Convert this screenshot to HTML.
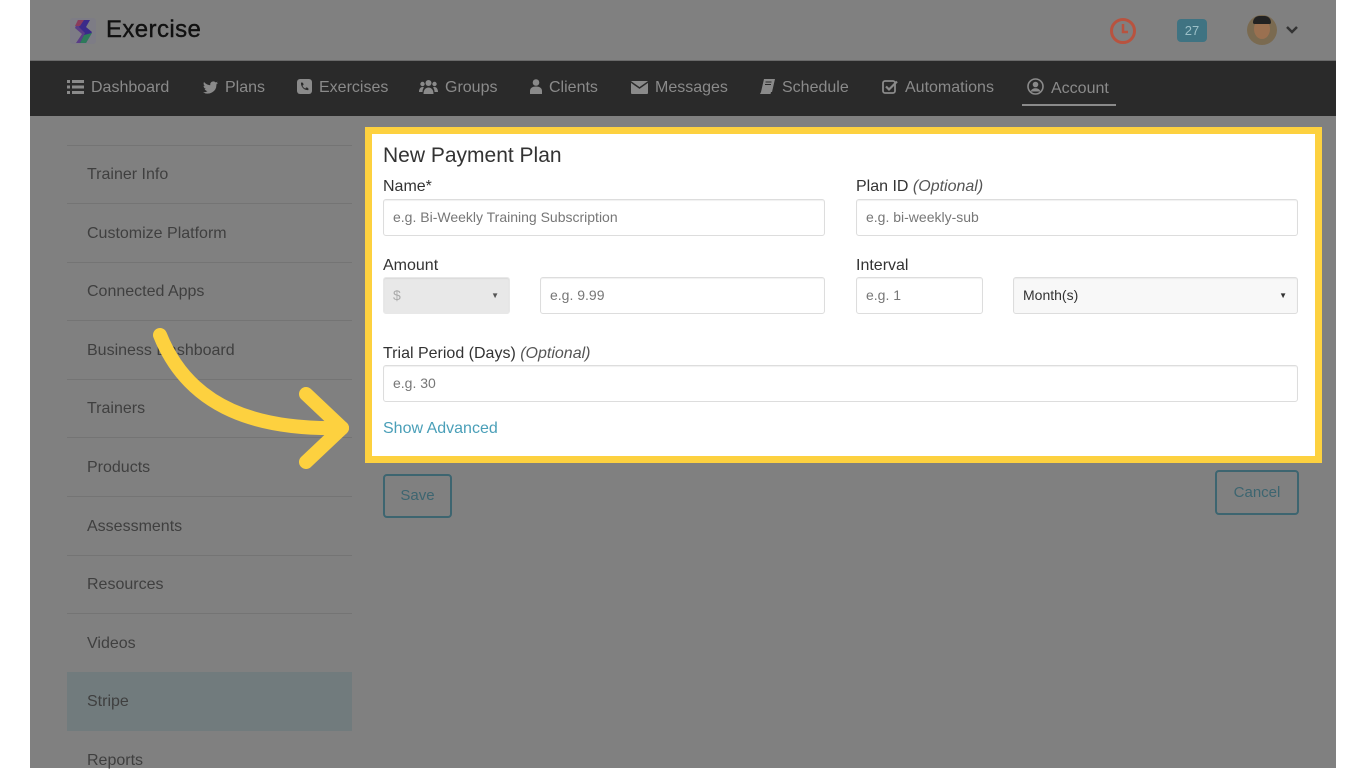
<!DOCTYPE html>
<html><head><meta charset="utf-8"><style>
*{box-sizing:border-box;margin:0;padding:0}
body{width:1366px;height:768px;background:#fff;font-family:"Liberation Sans",sans-serif;position:relative;overflow:hidden}
.pg{position:absolute;left:30px;top:0;width:1306px;height:768px;background:#808080}
.a{position:absolute}
.nav{left:30px;top:60px;width:1306px;height:56px;background:#2a2a2a;border-top:1px solid #6a6a6a}
.ni{position:absolute;top:78px;color:#8a8a8a;font-size:16px;height:20px;line-height:20px;white-space:nowrap}
.ni svg{vertical-align:-2px;margin-right:7px}
.sl{position:absolute;left:67px;width:285px;height:1px;background:#747474}
.st{position:absolute;left:87px;font-size:16px;color:#3f3f3f}
.box{left:365px;top:127px;width:957px;height:336px;border:7px solid #fdd13f;background:#fff}
.lbl{position:absolute;font-size:16px;color:#333}
.in{position:absolute;height:37px;border:1px solid #ddd;border-radius:3px;background:#fff;font-size:14px;color:#777;padding-left:9px;line-height:35px;box-shadow:inset 0 1px 1px rgba(0,0,0,.06)}
.btn{position:absolute;border:2px solid #3d6570;border-radius:4px;color:#3d6570;font-size:15px;text-align:center}
</style></head><body>
<div class="pg"></div>
<svg class="a" style="left:70px;top:17px" width="28" height="28" viewBox="0 0 28 28">
<rect x="0" y="1" width="26" height="26" rx="3" fill="#7d7c85"/>
<path d="M8 3 L18 3 L13 10 L20 16 L14 26 L6 26 L12 17 L5 11 Z" fill="#5a3d86"/>
<path d="M12 3 L20 3 L16 10 L22 15 L16 26 L10 26 L15 16 L9 10 Z" fill="#3a2a8a"/>
<path d="M14 18 L22 16 L16 26 L10 26 Z" fill="#2e7a5a"/>
<path d="M8 3 L14 3 L10 9 L5 9 Z" fill="#8a3b5c"/>
</svg>
<div class="a" style="left:106px;top:16px;font-size:24px;color:#111;letter-spacing:0.4px;-webkit-text-stroke:0.4px #111">Exercise</div>
<svg class="a" style="left:1109px;top:17px" width="28" height="28" viewBox="0 0 28 28"><circle cx="14" cy="14" r="11.5" fill="none" stroke="#b8533f" stroke-width="3"/><path d="M14 7 V15 H19" fill="none" stroke="#b8533f" stroke-width="2.5"/></svg>
<div class="a" style="left:1177px;top:19px;width:30px;height:23px;background:#3f7382;border-radius:4px;color:#9cc0c8;font-size:13px;text-align:center;line-height:23px">27</div>
<div class="a" style="left:1247px;top:15px;width:30px;height:30px;border-radius:50%;background:#7a6a50;overflow:hidden"><div style="position:absolute;left:7px;top:4px;width:16px;height:20px;border-radius:50%;background:#9a7050"></div><div style="position:absolute;left:6px;top:1px;width:18px;height:8px;border-radius:8px 8px 2px 2px;background:#222"></div></div>
<svg class="a" style="left:1285px;top:25px" width="14" height="10" viewBox="0 0 14 10"><path d="M2 2 L7 7 L12 2" fill="none" stroke="#333" stroke-width="2.5"/></svg>
<div class="a nav"></div>
<div class="ni" style="left:67px"><svg width="17" height="14" viewBox="0 0 17 14" fill="#8a8a8a"><rect x="0" y="0" width="3" height="3"/><rect x="5" y="0" width="12" height="3"/><rect x="0" y="5.5" width="3" height="3"/><rect x="5" y="5.5" width="12" height="3"/><rect x="0" y="11" width="3" height="3"/><rect x="5" y="11" width="12" height="3"/></svg>Dashboard</div>
<div class="ni" style="left:203px"><svg width="15" height="13" viewBox="0 0 16 13" fill="#8a8a8a"><path d="M16 1.5c-.6.3-1.2.4-1.9.5.7-.4 1.2-1 1.4-1.8-.6.4-1.3.6-2.1.8A3.3 3.3 0 0 0 7.8 4C5.1 3.9 2.7 2.6 1.1.6c-.9 1.5-.4 3.4 1 4.4-.5 0-1-.2-1.5-.4 0 1.6 1.1 3 2.6 3.3-.5.1-1 .2-1.5.1.4 1.3 1.7 2.3 3.1 2.3A6.6 6.6 0 0 1 0 11.5 9.3 9.3 0 0 0 14.3 3.2c.7-.4 1.2-1 1.7-1.7z"/></svg>Plans</div>
<div class="ni" style="left:297px"><svg width="15" height="15" viewBox="0 0 15 15"><rect width="15" height="15" rx="3" fill="#8a8a8a"/><path d="M4 3.5l2 .3.6 2-1.2 1c.6 1.3 1.5 2.2 2.8 2.8l1-1.2 2 .6.3 2c-4 .8-8-3.2-7.5-7.5z" fill="#2a2a2a"/></svg>Exercises</div>
<div class="ni" style="left:419px"><svg width="19" height="15" viewBox="0 0 19 15" fill="#8a8a8a"><circle cx="9.5" cy="4" r="3"/><circle cx="3.5" cy="5" r="2.2"/><circle cx="15.5" cy="5" r="2.2"/><path d="M4.5 15c0-4 2-6.5 5-6.5s5 2.5 5 6.5z"/><path d="M0 13c0-3 1.5-5 3.5-5 1 0 1.5.5 1.5.5-1 1-1.5 2.5-1.5 4.5z"/><path d="M19 13c0-3-1.5-5-3.5-5-1 0-1.5.5-1.5.5 1 1 1.5 2.5 1.5 4.5z"/></svg>Groups</div>
<div class="ni" style="left:530px"><svg width="12" height="15" viewBox="0 0 12 15" fill="#8a8a8a"><circle cx="6" cy="3.5" r="3.3"/><path d="M0 15v-3c0-3 2.5-4.5 6-4.5s6 1.5 6 4.5v3z"/></svg>Clients</div>
<div class="ni" style="left:631px"><svg width="17" height="13" viewBox="0 0 17 13" fill="#8a8a8a"><rect width="17" height="13" rx="1"/><path d="M0 1l8.5 6 8.5-6" stroke="#2a2a2a" stroke-width="1.5" fill="none"/></svg>Messages</div>
<div class="ni" style="left:760px"><svg width="15" height="15" viewBox="0 0 15 15" fill="#8a8a8a"><path d="M4 0h11l-3 13H1z"/><path d="M1 13h10l-.5 2H0z"/><path d="M5.5 3h6M5 5.5h6" stroke="#2a2a2a" stroke-width="1"/></svg>Schedule</div>
<div class="ni" style="left:882px"><svg width="16" height="15" viewBox="0 0 16 15"><rect x="1" y="2" width="12" height="12" rx="2" fill="none" stroke="#8a8a8a" stroke-width="1.8"/><path d="M4 7.5l3 3 8-8" fill="none" stroke="#8a8a8a" stroke-width="2.2"/></svg>Automations</div>
<div class="ni" style="left:1027px"><svg width="17" height="17" viewBox="0 0 17 17"><circle cx="8.5" cy="8.5" r="7.5" fill="none" stroke="#8a8a8a" stroke-width="1.6"/><circle cx="8.5" cy="6.5" r="2.8" fill="#8a8a8a"/><path d="M3.5 13.5c1-2.5 3-3.3 5-3.3s4 .8 5 3.3" fill="#8a8a8a"/></svg>Account</div>
<div class="a" style="left:1022px;top:104px;width:94px;height:2px;background:#8a8a8a"></div>
<div class="sl" style="top:145px"></div><div class="st" style="top:166px">Trainer Info</div>
<div class="sl" style="top:203px"></div><div class="st" style="top:225px">Customize Platform</div>
<div class="sl" style="top:262px"></div><div class="st" style="top:283px">Connected Apps</div>
<div class="sl" style="top:320px"></div><div class="st" style="top:342px">Business Dashboard</div>
<div class="sl" style="top:379px"></div><div class="st" style="top:400px">Trainers</div>
<div class="sl" style="top:437px"></div><div class="st" style="top:459px">Products</div>
<div class="sl" style="top:496px"></div><div class="st" style="top:518px">Assessments</div>
<div class="sl" style="top:555px"></div><div class="st" style="top:576px">Resources</div>
<div class="sl" style="top:613px"></div><div class="st" style="top:635px">Videos</div>
<div class="a" style="left:67px;top:672px;width:285px;height:59px;background:#717b7d"></div><div class="st" style="top:693px">Stripe</div>
<div class="st" style="top:752px">Reports</div>
<div class="a box"></div>
<div class="a" style="left:383px;top:144px;font-size:21px;color:#333">New Payment Plan</div>
<div class="lbl" style="left:383px;top:178px">Name*</div>
<div class="in" style="left:383px;top:199px;width:442px">e.g. Bi-Weekly Training Subscription</div>
<div class="lbl" style="left:856px;top:178px">Plan ID <i style="color:#555">(Optional)</i></div>
<div class="in" style="left:856px;top:199px;width:442px">e.g. bi-weekly-sub</div>
<div class="lbl" style="left:383px;top:257px">Amount</div>
<div class="in" style="left:383px;top:277px;width:127px;background:#e8e8e8;border-color:#e8e8e8;color:#aaa">$<span style="position:absolute;right:10px;font-size:8px;color:#555">▼</span></div>
<div class="in" style="left:540px;top:277px;width:285px">e.g. 9.99</div>
<div class="lbl" style="left:856px;top:257px">Interval</div>
<div class="in" style="left:856px;top:277px;width:127px">e.g. 1</div>
<div class="in" style="left:1013px;top:277px;width:285px;background:#f8f8f8;color:#333">Month(s)<span style="position:absolute;right:10px;font-size:8px;color:#333">▼</span></div>
<div class="lbl" style="left:383px;top:345px">Trial Period (Days) <i style="color:#555">(Optional)</i></div>
<div class="in" style="left:383px;top:365px;width:915px">e.g. 30</div>
<div class="a" style="left:383px;top:420px;font-size:16px;color:#4a9fb8">Show Advanced</div>
<div class="btn" style="left:383px;top:474px;width:69px;height:44px;line-height:40px">Save</div>
<div class="btn" style="left:1215px;top:470px;width:84px;height:45px;line-height:41px">Cancel</div>
<svg class="a" style="left:0;top:0" width="1366" height="768"><g fill="none" stroke="#fdd13f" stroke-width="14" stroke-linecap="round" stroke-linejoin="round"><path d="M160 335 C190 410 260 430 342 428"/><path d="M306 394 L342 428 L306 462"/></g></svg>
</body></html>
